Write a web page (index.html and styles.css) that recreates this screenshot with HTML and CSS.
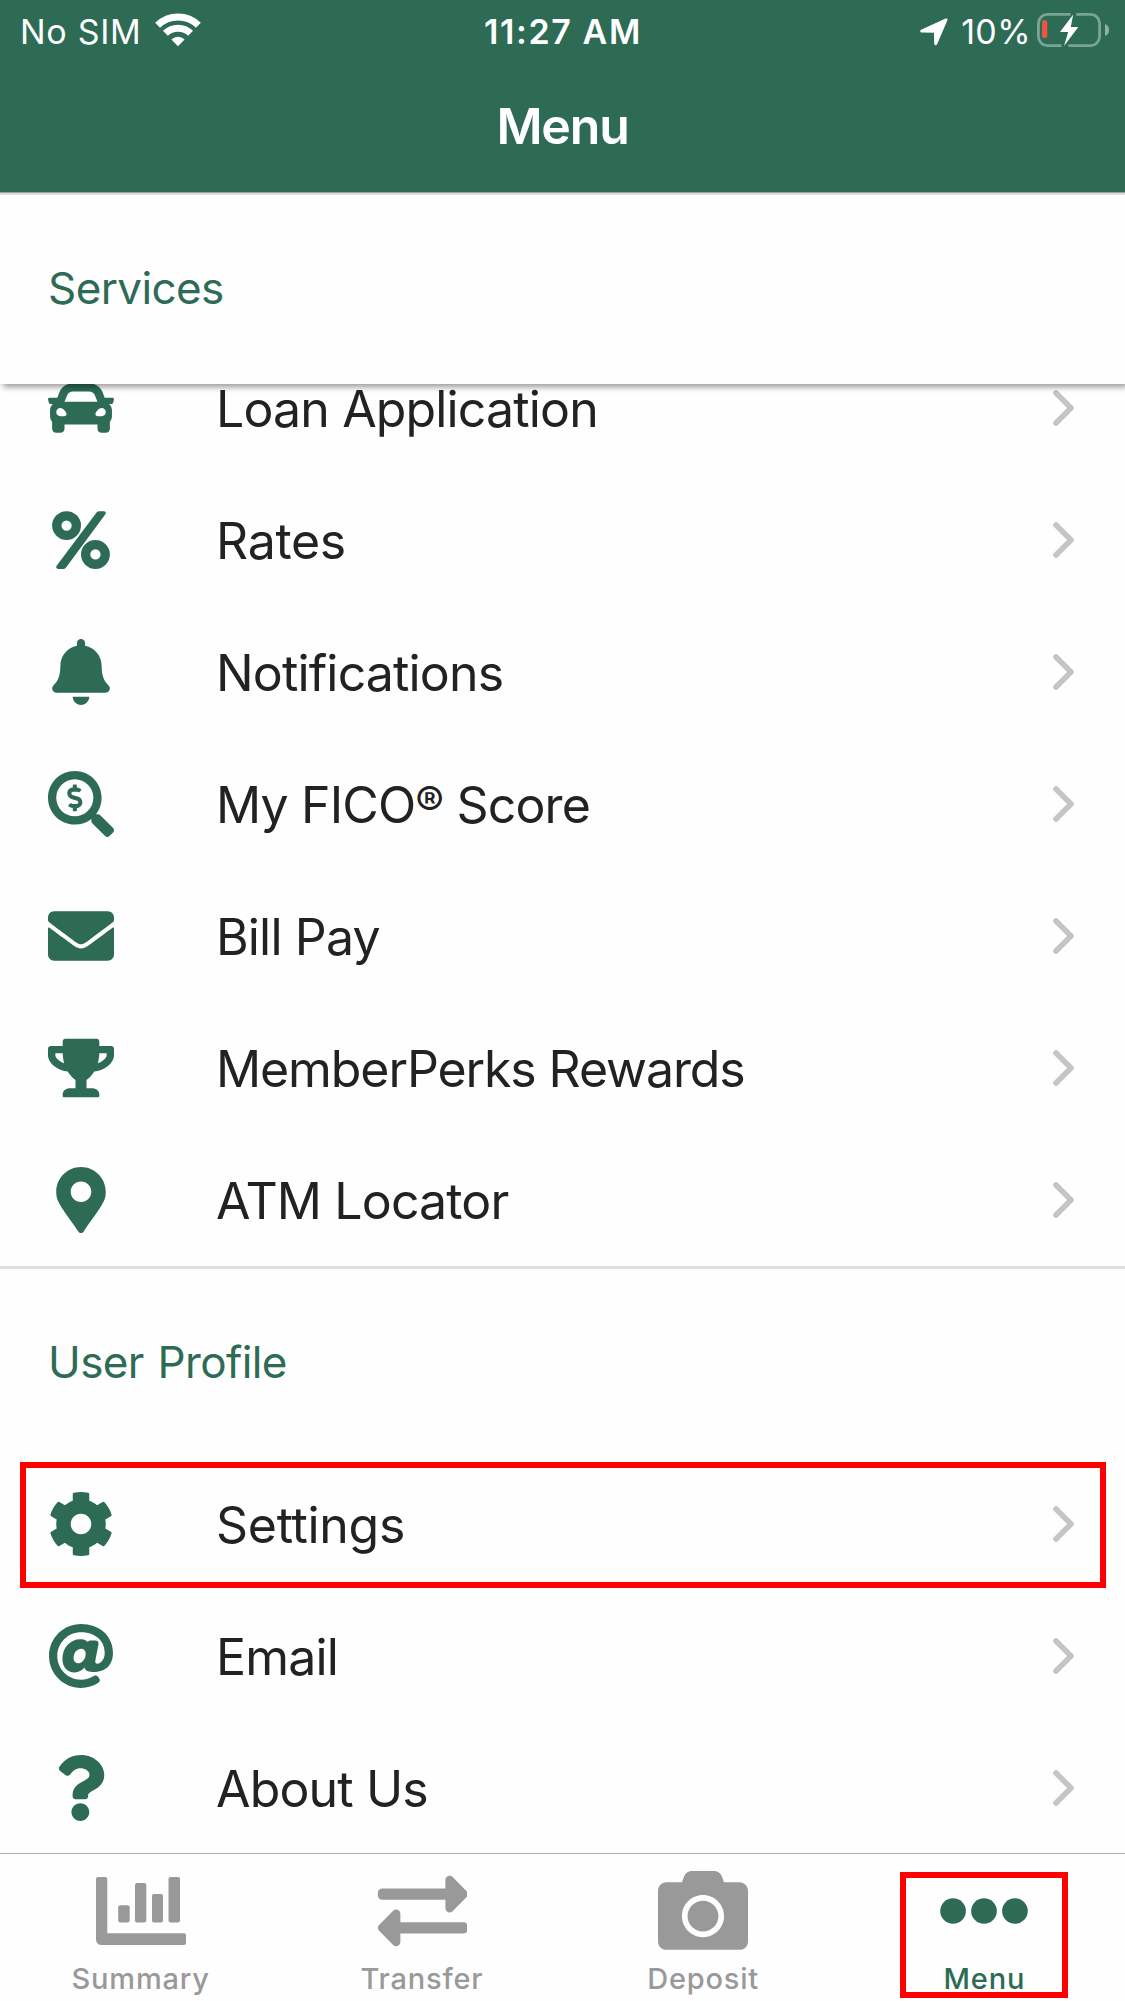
FILE: index.html
```html
<!DOCTYPE html>
<html lang="en">
<head>
<meta charset="utf-8">
<title>Menu</title>
<link rel="stylesheet" href="styles.css">
</head>
<body>
<div class="app">
  <header class="top">
    <div class="status">
      <div class="status-left">
        <span class="carrier">No SIM</span>
        <svg class="wifi" viewBox="0 0 46 34"><g fill="none" stroke="#fff" stroke-width="7"><path d="M2.6 12.3A29.2 29.2 0 0 1 43.4 12.3"/><path d="M10.4 20.3A18 18 0 0 1 35.6 20.3"/></g><path fill="#fff" d="M23 33.2l-6.6-6.8a9.6 9.6 0 0 1 13.2 0z"/></svg>
      </div>
      <span class="clock">11:27 AM</span>
      <div class="status-right">
        <svg class="location" viewBox="0 0 28 28"><path fill="#fff" d="M25.6.6c1.5-.5 2.3.4 1.7 1.8L17.2 26c-.9 2-3 1.600-3-.4L14 14.700 2.200 14.500c-2.300 0-2.700-2-.6-2.900z"/></svg>
        <span class="percent">10%</span>
        <svg class="battery" viewBox="0 0 74 36">
          <path fill="none" stroke="#79a595" stroke-width="2.800" d="M34.500 2.400H11.400a9 9 0 0 0-9 9v13.200a9 9 0 0 0 9 9h14.100M40.200 2.400h14.400a9 9 0 0 1 9 9v13.200a9 9 0 0 1-9 9H32.400"/>
          <path fill="#8fb3a6" d="M69 12a6.500 6.500 0 0 1 0 12z"/>
          <rect x="6" y="8" width="5.300" height="18" rx="2.600" fill="#eb5545"/>
          <path fill="#fff" d="M37.200 2.500L24 20h8.200L28 34l14.300-19h-7.500z"/>
        </svg>
      </div>
    </div>
    <h1 class="title">Menu</h1>
  </header>

  <main class="content">
    <h2 class="section-title pinned">Services</h2>
    <ul class="list scrolled">
      <li class="row"><svg class="icon" viewBox="0 0 512 512"><path d="M499.990 176h-59.870l-16.640-41.600C406.380 91.630 365.570 64 319.500 64h-127c-46.060 0-86.880 27.630-103.990 70.400L71.870 176H12.010C4.200 176-1.530 183.340.37 190.910l6 24C7.700 220.250 12.500 224 18.010 224h20.070C24.650 235.730 16 252.780 16 272v48c0 16.120 6.160 30.670 16 41.930V416c0 17.670 14.330 32 32 32h32c17.670 0 32-14.330 32-32v-32h256v32c0 17.670 14.330 32 32 32h32c17.670 0 32-14.330 32-32v-54.070c9.840-11.250 16-25.800 16-41.930v-48c0-19.220-8.650-36.270-22.070-48H494c5.510 0 10.310-3.750 11.640-9.090l6-24c1.890-7.570-3.840-14.910-11.650-14.910zm-352.060-17.830c7.290-18.220 24.940-30.170 44.570-30.170h127c19.630 0 37.280 11.950 44.570 30.170L384 208H128l19.930-49.830zM96 319.800c-19.200 0-32-12.760-32-31.900S76.800 256 96 256s48 28.710 48 47.850-28.800 15.950-48 15.950zm320 0c-19.200 0-48 3.190-48-15.950S396.800 256 416 256s32 12.760 32 31.900-12.800 31.900-32 31.900z"/></svg><span class="label">Loan Application</span><svg class="chevron" viewBox="0 0 21 36"><path d="M3 3l15 15L3 33"/></svg></li>
      <li class="row"><svg class="icon" viewBox="0 0 448 512"><g fill="none" stroke="currentColor" stroke-width="72"><circle cx="112" cy="144" r="76"/><circle cx="336" cy="368" r="76"/></g><path d="M346 41c5-6 11-9 19-9h36c14 0 20 14 12 25L108 470c-5 7-10 10-18 10H47c-14 0-20-13-12-24z"/></svg><span class="label loose">Rates</span><svg class="chevron" viewBox="0 0 21 36"><path d="M3 3l15 15L3 33"/></svg></li>
      <li class="row"><svg class="icon" viewBox="0 0 448 512"><path d="M224 512c35.320 0 63.970-28.650 63.970-64H160.030c0 35.350 28.650 64 63.970 64zm215.390-149.710c-19.320-20.760-55.470-51.990-55.470-154.290 0-77.700-54.480-139.900-127.940-155.160V32c0-17.670-14.320-32-31.980-32s-31.980 14.330-31.980 32v20.840C118.560 68.100 64.080 130.300 64.080 208c0 102.300-36.150 133.530-55.470 154.290-6 6.450-8.660 14.160-8.610 21.710.11 16.400 12.980 32 32.100 32h383.800c19.120 0 32-15.600 32.100-32 .05-7.550-2.610-15.270-8.610-21.710z"/></svg><span class="label">Notifications</span><svg class="chevron" viewBox="0 0 21 36"><path d="M3 3l15 15L3 33"/></svg></li>
      <li class="row"><svg class="icon" viewBox="0 0 512 512"><path d="M505.040 442.660l-99.710-99.690c-4.500-4.500-10.600-7-17-7h-16.300c27.600-35.300 44-79.690 44-127.990C416.030 93.090 322.920 0 208.020 0S0 93.090 0 207.980s93.110 207.980 208.020 207.980c48.300 0 92.710-16.400 128.010-44v16.300c0 6.400 2.500 12.500 7 17l99.710 99.690c9.400 9.400 24.600 9.400 33.900 0l28.300-28.300c9.400-9.400 9.400-24.590.1-33.990zm-297.020-90.700c-79.540 0-144-64.340-144-143.980 0-79.530 64.350-143.980 144-143.980 79.540 0 144 64.340 144 143.980 0 79.530-64.350 143.980-144 143.980zm27.110-152.540l-45.010-13.500c-5.160-1.550-8.770-6.780-8.770-12.730 0-7.270 5.300-13.190 11.800-13.190h28.100c4.560 0 8.960 1.290 12.820 3.720 3.240 2.030 7.360 1.910 10.130-.73l11.750-11.210c3.530-3.370 3.330-9.210-.57-12.140-9.100-6.830-20.080-10.770-31.370-11.350V112c0-4.420-3.580-8-8-8h-16c-4.420 0-8 3.580-8 8v16.120c-23.630.63-42.680 20.550-42.680 45.070 0 19.970 12.990 37.810 31.580 43.390l45.010 13.500c5.160 1.550 8.770 6.780 8.770 12.730 0 7.270-5.300 13.190-11.800 13.190h-28.100c-4.560 0-8.960-1.290-12.820-3.720-3.240-2.030-7.360-1.910-10.130.73l-11.750 11.210c-3.530 3.370-3.330 9.210.57 12.140 9.100 6.830 20.080 10.770 31.370 11.350V304c0 4.420 3.580 8 8 8h16c4.420 0 8-3.580 8-8v-16.120c23.630-.63 42.680-20.540 42.680-45.070 0-19.970-12.990-37.810-31.590-43.390z"/></svg><span class="label">My FICO<span class="reg">®</span> Score</span><svg class="chevron" viewBox="0 0 21 36"><path d="M3 3l15 15L3 33"/></svg></li>
      <li class="row"><svg class="icon" viewBox="0 0 512 512"><path d="M502.300 190.800c3.900-3.100 9.700-.2 9.700 4.700V400c0 26.500-21.500 48-48 48H48c-26.500 0-48-21.500-48-48V195.600c0-5 5.700-7.800 9.700-4.700 22.400 17.400 52.100 39.500 154.100 113.600 21.100 15.400 56.700 47.800 92.200 47.600 35.700.3 72-32.800 92.300-47.600 102-74.100 131.600-96.300 154-113.700zM256 320c23.200.4 56.600-29.200 73.400-41.400 132.700-96.300 142.800-104.700 173.400-128.700 5.800-4.500 9.200-11.500 9.200-18.900v-19c0-26.500-21.500-48-48-48H48c-26.500 0-48 21.500-48 48v19c0 7.400 3.400 14.300 9.200 18.900 30.600 23.900 40.700 32.400 173.400 128.700 16.800 12.200 50.200 41.800 73.400 41.400z"/></svg><span class="label">Bill Pay</span><svg class="chevron" viewBox="0 0 21 36"><path d="M3 3l15 15L3 33"/></svg></li>
      <li class="row"><svg class="icon" viewBox="0 0 576 512"><path d="M552 64H448V24c0-13.300-10.700-24-24-24H152c-13.300 0-24 10.700-24 24v40H24C10.700 64 0 74.700 0 88v56c0 35.700 22.500 72.400 61.900 100.700 31.500 22.700 69.800 37.100 110 41.700C203.300 338.500 240 360 240 360v72h-48c-35.300 0-64 20.700-64 56v12c0 6.600 5.400 12 12 12h296c6.600 0 12-5.400 12-12v-12c0-35.300-28.700-56-64-56h-48v-72s36.700-21.500 68.100-73.600c40.300-4.600 78.600-19 110-41.700 39.300-28.300 61.900-65 61.900-100.700V88c0-13.300-10.700-24-24-24zM99.300 192.800C74.900 175.200 64 155.600 64 144v-16h64.200c1 32.600 5.800 61.200 12.800 86.200-15.100-5.200-29.200-12.400-41.700-21.400zM512 144c0 16.100-17.700 36.100-35.300 48.800-12.500 9-26.700 16.200-41.800 21.400 7-25 11.800-53.600 12.800-86.200H512v16z"/></svg><span class="label tight">MemberPerks Rewards</span><svg class="chevron" viewBox="0 0 21 36"><path d="M3 3l15 15L3 33"/></svg></li>
      <li class="row"><svg class="icon" viewBox="0 0 384 512"><path d="M172.268 501.670C26.970 291.031 0 269.413 0 192 0 85.961 85.961 0 192 0s192 85.961 192 192c0 77.413-26.970 99.031-172.268 309.670-9.535 13.774-29.930 13.773-39.464 0zM192 272c44.183 0 80-35.817 80-80s-35.817-80-80-80-80 35.817-80 80 35.817 80 80 80z"/></svg><span class="label">ATM Locator</span><svg class="chevron" viewBox="0 0 21 36"><path d="M3 3l15 15L3 33"/></svg></li>
    </ul>
    <h2 class="section-title divided">User Profile</h2>
    <ul class="list">
      <li class="row highlighted"><svg class="icon" viewBox="0 0 512 512"><path d="M487.400 315.700l-42.600-24.600c4.300-23.200 4.300-47 0-70.200l42.600-24.600c4.900-2.800 7.100-8.600 5.500-14-11.100-35.600-30-67.800-54.700-94.600-3.800-4.100-10-5.100-14.800-2.300L380.800 110c-17.900-15.400-38.500-27.300-60.800-35.100V25.800c0-5.600-3.900-10.500-9.400-11.700-36.700-8.200-74.300-7.800-109.200 0-5.500 1.200-9.400 6.100-9.400 11.700V75c-22.200 7.900-42.800 19.800-60.800 35.100L88.700 85.500c-4.900-2.800-11-1.900-14.800 2.300-24.700 26.700-43.600 58.900-54.700 94.600-1.700 5.400.6 11.200 5.500 14L67.300 221c-4.300 23.200-4.300 47 0 70.200l-42.600 24.600c-4.900 2.800-7.100 8.600-5.500 14 11.100 35.600 30 67.800 54.700 94.600 3.800 4.100 10 5.100 14.800 2.300l42.600-24.600c17.900 15.400 38.500 27.300 60.800 35.100v49.200c0 5.600 3.900 10.500 9.400 11.700 36.700 8.200 74.300 7.800 109.200 0 5.500-1.200 9.400-6.100 9.400-11.700v-49.200c22.200-7.900 42.800-19.800 60.800-35.100l42.600 24.600c4.900 2.800 11 1.900 14.800-2.300 24.700-26.700 43.600-58.900 54.700-94.600 1.500-5.500-.7-11.300-5.600-14.100zM256 336c-44.100 0-80-35.900-80-80s35.900-80 80-80 80 35.900 80 80-35.900 80-80 80z"/></svg><span class="label loose">Settings</span><svg class="chevron" viewBox="0 0 21 36"><path d="M3 3l15 15L3 33"/></svg></li>
      <li class="row"><svg class="icon" viewBox="0 0 512 512"><path d="M256 8C118.941 8 8 118.919 8 256c0 137.059 110.919 248 248 248 48.154 0 95.342-14.140 135.408-40.223 12.005-7.815 14.625-24.288 5.552-35.372l-10.177-12.433c-7.671-9.371-21.179-11.667-31.373-5.129C325.920 429.757 291.314 440 256 440c-101.458 0-184-82.542-184-184S154.542 72 256 72c100.139 0 184 57.619 184 160 0 38.786-21.093 79.742-58.170 83.693-17.349-.454-16.910-12.857-13.476-30.024l23.433-121.110C394.653 149.750 383.308 136 368.225 136h-44.981a13.518 13.518 0 0 0-13.432 11.993l-.01.092c-14.697-17.901-40.448-21.775-59.971-21.775-74.580 0-137.831 62.234-137.831 151.460 0 65.303 36.785 105.870 96 105.870 26.984 0 57.369-15.637 74.991-38.333 9.522 34.104 40.613 34.103 70.710 34.103C462.609 379.410 504 307.798 504 232 504 95.653 394.023 8 256 8zm-21.680 304.430c-22.249 0-36.070-15.623-36.070-40.771 0-44.993 30.779-72.729 58.630-72.729 22.292 0 35.601 15.241 35.601 40.770 0 45.061-33.875 72.730-58.161 72.730z"/></svg><span class="label">Email</span><svg class="chevron" viewBox="0 0 21 36"><path d="M3 3l15 15L3 33"/></svg></li>
      <li class="row"><svg class="icon" viewBox="5 0 384 512"><path d="M202.021 0C122.202 0 70.503 32.703 29.914 91.026c-7.363 10.580-5.093 25.086 5.178 32.874l43.138 32.709c10.373 7.865 25.132 6.026 33.253-4.148 25.049-31.381 43.630-49.449 82.757-49.449 30.764 0 68.816 19.799 68.816 49.631 0 22.552-18.617 34.134-48.993 51.164-35.423 19.860-82.299 44.576-82.299 106.405V320c0 13.255 10.745 24 24 24h72.471c13.255 0 24-10.745 24-24v-5.773c0-42.860 125.268-44.645 125.268-160.627C377.504 66.256 286.902 0 202.021 0zM192 373.459c-38.196 0-69.271 31.075-69.271 69.271 0 38.195 31.075 69.270 69.271 69.270s69.271-31.075 69.271-69.271-31.075-69.270-69.271-69.270z"/></svg><span class="label">About Us</span><svg class="chevron" viewBox="0 0 21 36"><path d="M3 3l15 15L3 33"/></svg></li>
    </ul>
  </main>

  <nav class="tabs">
    <a class="tab"><svg class="tab-icon" viewBox="0 0 90 90"><path d="M2 11h7.300a2 2 0 0 1 2 2v54.300H88a2 2 0 0 1 2 2V77a2 2 0 0 1-2 2H5.500A5.500 5.500 0 0 1 0 73.500V13a2 2 0 0 1 2-2z"/><rect x="22.200" y="39.300" width="11.500" height="17.300" rx="2"/><rect x="39" y="17" width="11.300" height="39.600" rx="2"/><rect x="56" y="28" width="11" height="28.600" rx="2"/><rect x="72.500" y="11" width="11.500" height="45.600" rx="2"/></svg><span class="tab-label">Summary</span></a>
    <a class="tab"><svg class="tab-icon" viewBox="-5 0 512 512"><path d="M0 168v-16c0-13.255 10.745-24 24-24h360V80c0-21.367 25.899-32.042 40.971-16.971l80 80c9.372 9.373 9.372 24.569 0 33.941l-80 80C409.956 271.982 384 261.456 384 240v-48H24c-13.255 0-24-10.745-24-24zm488 152H128v-48c0-21.314-25.862-32.080-40.971-16.971l-80 80c-9.372 9.373-9.372 24.569 0 33.941l80 80C102.057 463.997 128 453.437 128 432v-48h360c13.255 0 24-10.745 24-24v-16c0-13.255-10.745-24-24-24z"/></svg><span class="tab-label">Transfer</span></a>
    <a class="tab"><svg class="tab-icon" viewBox="0 3 512 512"><path d="M512 144v288c0 26.500-21.500 48-48 48H48c-26.500 0-48-21.500-48-48V144c0-26.500 21.500-48 48-48h88l12.300-32.900c7-18.700 24.900-31.100 44.900-31.100h125.500c20 0 37.900 12.400 44.900 31.100L376 96h88c26.500 0 48 21.500 48 48zM376 288c0-66.200-53.800-120-120-120s-120 53.800-120 120 53.800 120 120 120 120-53.800 120-120zm-32 0c0 48.500-39.500 88-88 88s-88-39.500-88-88 39.500-88 88-88 88 39.500 88 88z"/></svg><span class="tab-label">Deposit</span></a>
    <a class="tab active"><svg class="tab-icon" viewBox="0 0 512 512"><circle cx="80" cy="256" r="73"/><circle cx="256" cy="256" r="73"/><circle cx="432" cy="256" r="73"/></svg><span class="tab-label">Menu</span></a>
  </nav>
</div>
</body>
</html>
```
FILE: styles.css
```css
* { box-sizing: border-box; }

body {
  margin: 0;
  background: #fefefe;
  color: #222;
  font-family: Inter, "Liberation Sans", sans-serif;
}

.app {
  width: 1125px;
  height: 2001px;
  display: flex;
  flex-direction: column;
  overflow: hidden;
}

/* Status bar and title */
.top {
  flex: none;
  height: 195px;
  background: #2d6b54;
  border-bottom: 2px solid #dfdddd;
  box-shadow: inset 0 -1px #a39c9f;
  color: #fff;
}

.status {
  height: 60px;
  padding: 3px 15px 0 20px;
  display: grid;
  grid-template-columns: 1fr auto 1fr;
  align-items: center;
  font-size: 34px;
  line-height: 57px;
}

.status-left,
.status-right {
  display: flex;
  align-items: center;
}

.status-right { justify-content: flex-end; }
.carrier { letter-spacing: 0.7px; }
.wifi { width: 46px; height: 34px; margin: -4px 0 0 14px; }
.clock { margin: 0 2px 0 -2px; font-weight: 600; letter-spacing: 1.6px; }
.location { width: 28px; height: 28px; margin-right: 13px; }
.percent { letter-spacing: 0.4px; }
.battery { width: 74px; height: 36px; margin: -3px 0 0 5px; }

.title {
  margin: 0;
  font-size: 50px;
  font-weight: 600;
  line-height: 132px;
  letter-spacing: -1.2px;
  text-align: center;
}

/* Scrolling menu */
.content {
  flex: 1;
  min-height: 0;
  overflow: hidden;
}

.section-title {
  margin: 0;
  height: 189px;
  padding: 2px 48px 0;
  color: #2d6b54;
  font-size: 44px;
  font-weight: 400;
  line-height: 182px;
  letter-spacing: -0.6px;
  word-spacing: 2px;
  background: #fefefe;
}

.pinned {
  position: relative;
  z-index: 1;
  box-shadow: 3px 3px 6px rgba(0, 0, 0, 0.4);
}

.divided {
  height: 192px;
  border-top: 3px solid #dedede;
}

.list {
  margin: 0;
  padding: 0;
  list-style: none;
}

.scrolled { margin-top: -42px; }

.row {
  position: relative;
  height: 132px;
  padding: 0 51px 0 48px;
  display: flex;
  align-items: center;
}

.icon {
  flex: none;
  width: 66px;
  height: 66px;
  color: #2d6b54;
  fill: currentColor;
}

.label {
  flex: 1;
  margin-left: 102px;
  padding-top: 1px;
  font-size: 50px;
  line-height: 64px;
  letter-spacing: -0.85px;
  white-space: nowrap;
}

.label.loose { letter-spacing: -0.3px; }
.label.tight { letter-spacing: -1.1px; }

.reg {
  font-size: 43px;
  line-height: 1;
  vertical-align: 6px;
}

.chevron {
  flex: none;
  width: 21px;
  height: 36px;
  fill: none;
  stroke: #c5c5c7;
  stroke-width: 5.6;
  stroke-linecap: round;
  stroke-linejoin: round;
}

/* Callout frames laid over the row and the active tab */
.highlighted::after,
.active::after {
  content: "";
  position: absolute;
  border: 6px solid #f00;
}

.highlighted::after { inset: 4px 19px 2px 20px; }
.active::after { inset: 18px 57px 3px 56px; }

/* Bottom tab bar */
.tabs {
  flex: none;
  height: 148px;
  border-top: 1px solid #b0b0b0;
  display: grid;
  grid-template-columns: repeat(4, 1fr);
  background: #fefefe;
}

.tab {
  position: relative;
  padding-top: 12px;
  display: flex;
  flex-direction: column;
  align-items: center;
  color: #999;
}

.active { color: #2d6b54; }
.tab-icon { width: 90px; height: 90px; fill: currentColor; }

.tab-label {
  margin-top: 4px;
  font-size: 29px;
  font-weight: 500;
  line-height: 37px;
  letter-spacing: 0.8px;
}
```
